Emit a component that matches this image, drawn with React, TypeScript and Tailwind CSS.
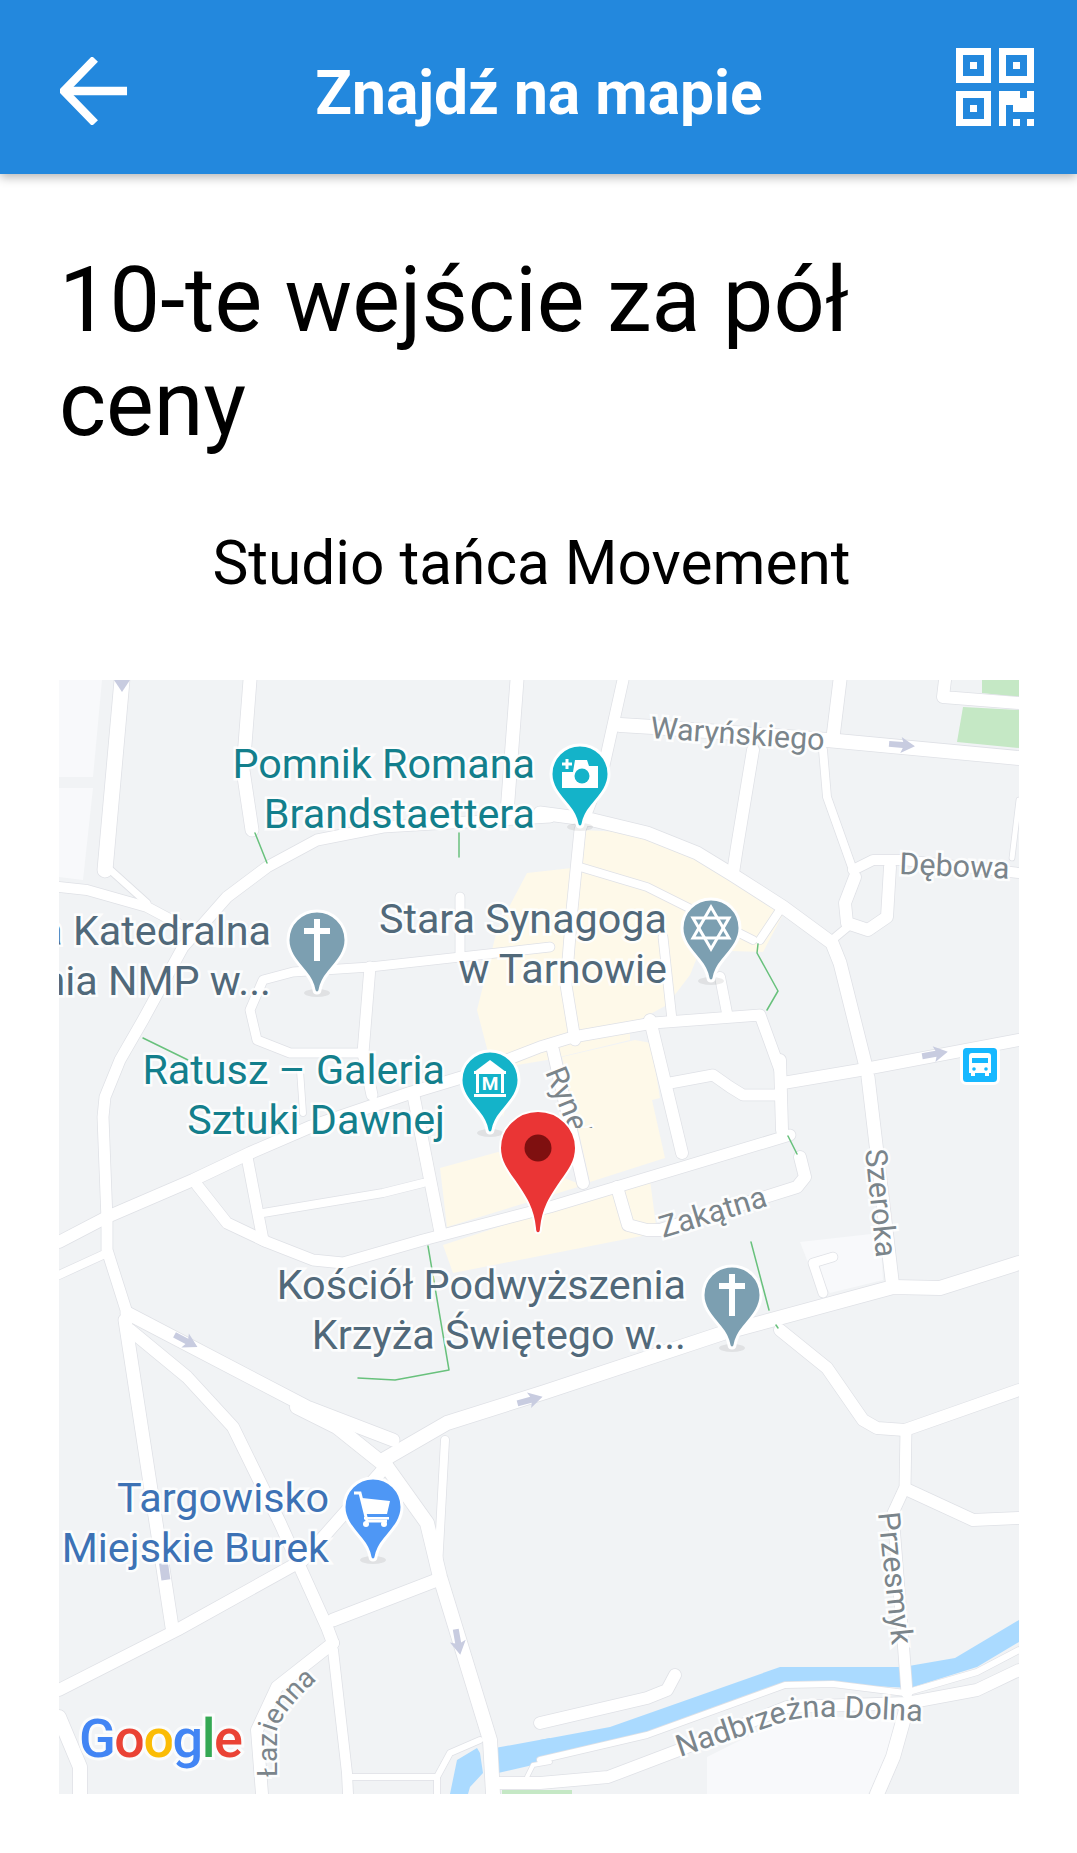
const roads: [string, number][] = [
  ["122,680 105,870", 15],
  ["59,887 87,890 147,907 177,923", 10],
  ["107,867 147,903", 7],
  ["250,680 243,770 252,830", 13],
  ["550,817 383,827 317,840 267,867 227,897 183,947 143,1020 120,1060 105,1097 103,1117 107,1220 107,1250 127,1313", 11],
  ["517,680 507,813", 13],
  ["460,897 460,953", 9],
  ["550,947 370,967 293,972 263,980 250,1010 257,1040 290,1053 360,1053", 9],
  ["370,967 363,1053 372,1095", 11],
  ["623,680 603,770 580,830 572,910 566,985 575,1040", 11],
  ["620,725 653,727 827,740 1019,758", 14],
  ["840,680 833,737", 13],
  ["753,750 737,847 733,873", 12],
  ["823,750 827,797 853,870", 8],
  ["945,680 943,697 1019,703", 12],
  ["540,813 593,820 647,833 697,853 733,875 783,907 832,943 840,963 865,1063", 13],
  ["832,940 850,925", 8],
  ["853,870 873,860 903,860 1019,873", 10],
  ["890,867 887,917 868,930 847,923 845,903 855,877", 12],
  ["1019,800 1012,858", 5],
  ["580,867 647,887 753,940", 8],
  ["780,910 760,940", 8],
  ["663,937 672,1020", 9],
  ["720,977 727,1013", 10],
  ["463,1077 540,1047 573,1037 653,1023 760,1015 780,1070", 11],
  ["783,1083 860,1070 1019,1040", 12],
  ["650,1020 682,1153", 12],
  ["553,1050 583,1183", 12],
  ["670,1083 713,1075 730,1087 743,1095 780,1095", 11],
  ["780,1060 782,1130", 12],
  ["790,1135 550,1207 423,1240 343,1263 313,1260 267,1242 227,1223 197,1185", 11],
  ["868,1077 877,1153 892,1280", 13],
  ["617,1187 628,1225 647,1230 660,1230 797,1187 805,1177 800,1157", 12],
  ["383,1460 447,1423 545,1392 723,1333 893,1287 940,1288 1019,1263", 14],
  ["823,1293 813,1263 833,1257", 9],
  ["780,1330 827,1368 863,1420 877,1428 905,1430 1019,1390", 12],
  ["906,1430 905,1487 893,1513 903,1640 907,1693", 11],
  ["908,1490 973,1520 1019,1518", 12],
  ["540,1723 647,1698 667,1690 675,1675", 12],
  ["59,1242 107,1217 193,1180 250,1153 310,1127 410,1093 463,1077", 12],
  ["59,1275 107,1253", 8],
  ["247,1157 263,1240", 11],
  ["263,1213 383,1193 423,1183", 8],
  ["413,1093 440,1230", 12],
  ["300,1070 303,1113", 6],
  ["127,1313 307,1407 393,1440", 13],
  ["125,1320 172,1627", 13],
  ["130,1330 187,1377 233,1427 280,1523 327,1627 333,1643", 12],
  ["333,1643 277,1687 257,1730 262,1794", 12],
  ["333,1650 347,1773 348,1794", 10],
  ["59,1690 177,1630 303,1560 387,1465", 12],
  ["333,1620 437,1580", 13],
  ["297,1407 337,1427 387,1467 427,1523 440,1577 490,1740 493,1794", 14],
  ["438,1567 445,1440", 8],
  ["352,1777 437,1777 450,1753 480,1740", 6],
  ["437,1777 437,1794", 6],
  ["498,1783 540,1783 608,1777 687,1747 787,1707 907,1703 977,1690 1019,1670", 12],
  ["540,1760 647,1735 785,1685 833,1684 905,1693 977,1672 1019,1650", 6],
  ["907,1707 893,1757 877,1794", 14],
  ["59,1717 80,1767 80,1794", 14],
  ["527,1777 533,1765 550,1762", 4],
];

const beige = [
  "527,873 572,868 580,830 647,833 717,860 788,905 763,952 700,950 690,975 667,1005 630,1025 630,1040 547,1060 517,1065 503,1117 490,1060 477,1010 497,930",
  "562,1057 635,1040 651,1043 660,1098 652,1100 665,1158 590,1182",
  "440,1168 498,1152 577,1183 578,1187 447,1227",
  "443,1245 612,1190 650,1180 657,1233 453,1273",
];

const greens = [
  "255,833 267,863",
  "459,833 459,857",
  "143,1038 188,1060",
  "758,944 757,953 778,991 767,1010",
  "788,1136 797,1154",
  "751,1242 769,1310",
  "776,1325 778,1328",
  "428,1246 449,1370 395,1380 358,1378",
];

const pinPath =
  "M0 -29C16 -29 29 -16 29 0C29 13 20 22 12 32C7 38 4 44 3 50C2.5 54 -2.5 54 -3 50C-4 44 -7 38 -12 32C-20 22 -29 13 -29 0C-29 -16 -16 -29 0 -29Z";

function Pin({ x, y, color, children }: { x: number; y: number; color: string; children?: React.ReactNode }) {
  return (
    <g transform={`translate(${x} ${y})`}>
      <ellipse cx="0" cy="53" rx="13" ry="4" fill="#000" opacity="0.07" />
      <path d={pinPath} fill={color} stroke="#fff" strokeWidth="3" />
      {children}
    </g>
  );
}

function Cross() {
  return (
    <g fill="#fff">
      <rect x="-3" y="-21" width="6" height="42" />
      <rect x="-13" y="-12" width="26" height="6" />
    </g>
  );
}

function Arrow({ x, y, angle }: { x: number; y: number; angle: number }) {
  return (
    <polygon
      transform={`translate(${x} ${y}) rotate(${angle})`}
      points="-13,-3 1,-3 -1,-8 13,0 -1,8 1,3 -13,3"
      fill="#c8cce0"
    />
  );
}

function Label({ x, y, lines, color }: { x: number; y: number; lines: string[]; color: string }) {
  return (
    <g fontSize="41.3" textAnchor="end" fill={color} stroke="#fff" strokeWidth="5" strokeOpacity="0.85" paintOrder="stroke">
      {lines.map((line, i) => (
        <text key={i} x={x} y={y + i * 50}>
          {line}
        </text>
      ))}
    </g>
  );
}

function Street({ x, y, angle, children }: { x: number; y: number; angle: number; children: string }) {
  return (
    <text
      transform={`translate(${x} ${y}) rotate(${angle})`}
      fontSize="30.5"
      fill="#7b858b"
      stroke="#fff"
      strokeWidth="5"
      strokeOpacity="0.85"
      paintOrder="stroke"
    >
      {children}
    </text>
  );
}

function MapView() {
  return (
    <svg viewBox="59 680 960 1114" className="block w-[960px] h-[1114px] font-['Roboto',sans-serif]">
      <defs>
        <clipPath id="rynek-clip">
          <rect x="530" y="1050" width="80" height="78" />
        </clipPath>
      </defs>
      <rect x="59" y="680" width="960" height="1114" fill="#f1f3f5" />

      <polygon points="59,680 102,680 93,777 59,777" fill="#f8f9fb" />
      <polygon points="59,788 93,788 83,880 59,877" fill="#f8f9fb" />
      <polygon points="800,1242 880,1233 883,1280 830,1293 807,1260" fill="#f8f9fb" />
      <polygon points="707,1757 787,1717 898,1717 890,1757 868,1794 707,1794" fill="#f8f9fb" />

      {beige.map((p) => (
        <polygon key={p} points={p} fill="#fef9e9" />
      ))}

      <polygon points="982,680 1019,680 1019,697 982,693" fill="#c5e8c5" />
      <polygon points="963,707 1019,710 1019,748 957,742" fill="#c5e8c5" />
      <polygon points="502,1790 572,1790 572,1794 502,1794" fill="#c5e8c5" />

      <polygon
        points="540,1740 610,1727 780,1667 903,1667 955,1658 1019,1620 1019,1642 977,1667 910,1688 833,1684 785,1685 647,1733 540,1760"
        fill="#aadaff"
      />
      <polygon points="550,1738 495,1748 498,1773 550,1761" fill="#aadaff" />
      <polygon points="480,1753 483,1773 470,1787 468,1794 450,1794 457,1760 477,1748" fill="#aadaff" />

      <g fill="none" strokeLinejoin="round" strokeLinecap="round">
        {roads.map(([p, w]) => (
          <polyline key={"edge" + p} points={p} stroke="#dfe1e6" strokeWidth={w + 1.5} />
        ))}
        {roads.map(([p, w]) => (
          <polyline key={p} points={p} stroke="#fff" strokeWidth={w} />
        ))}
        {greens.map((p) => (
          <polyline key={p} points={p} stroke="#68c17c" strokeWidth="1.5" />
        ))}
      </g>

      <Arrow x={902} y={745} angle={5} />
      <Arrow x={935} y={1054} angle={-10} />
      <Arrow x={186} y={1341} angle={28} />
      <Arrow x={530} y={1400} angle={-15} />
      <Arrow x={458} y={1642} angle={80} />
      <polygon points="114,680 130,680 122,692" fill="#c8cce0" />
      <rect x="160" y="1563" width="9" height="17" transform="rotate(-8 165 1570)" fill="#c8cce0" />

      <Street x={650} y={738} angle={4}>Waryńskiego</Street>
      <Street x={899} y={874} angle={2.5}>Dębowa</Street>
      <g clipPath="url(#rynek-clip)">
        <Street x={545} y={1072} angle={68}>Rynek</Street>
      </g>
      <Street x={865} y={1150} angle={84}>Szeroka</Street>
      <Street x={663} y={1238} angle={-17}>Zakątna</Street>
      <Street x={878} y={1513} angle={84}>Przesmyk</Street>

      <path id="nadbrzezna" d="M680 1757L790 1720Q810 1716 833 1717L935 1722" fill="none" />
      <path id="lazienna" d="M277 1777L277 1730Q285 1705 340 1660" fill="none" />
      <g fill="#7b858b" stroke="#fff" strokeWidth="5" strokeOpacity="0.85" paintOrder="stroke">
        <text fontSize="30.5">
          <textPath href="#nadbrzezna">Nadbrzeżna Dolna</textPath>
        </text>
        <text fontSize="28">
          <textPath href="#lazienna">Łazienna</textPath>
        </text>
      </g>

      <Label x={535} y={778} lines={["Pomnik Romana", "Brandstaettera"]} color="#137f8c" />
      <Label x={271} y={945} lines={["Bazylika Katedralna", "Narodzenia NMP w..."]} color="#51697a" />
      <Label x={667} y={933} lines={["Stara Synagoga", "w Tarnowie"]} color="#51697a" />
      <Label x={445} y={1084} lines={["Ratusz – Galeria", "Sztuki Dawnej"]} color="#137f8c" />
      <Label x={686} y={1299} lines={["Kościół Podwyższenia", "Krzyża Świętego w..."]} color="#51697a" />
      <Label x={329} y={1512} lines={["Targowisko", "Miejskie Burek"]} color="#3d72b5" />

      <Pin x={580} y={774} color="#14b3c9">
        <path d="M-18 -2H-7L-5 -14H7L9 -8H18V14H-18Z" fill="#fff" />
        <circle cx="2" cy="2" r="7.5" fill="#14b3c9" />
        <rect x="-18" y="-11.5" width="10" height="3" fill="#fff" />
        <rect x="-14.5" y="-15" width="3" height="10" fill="#fff" />
      </Pin>
      <Pin x={711} y={928} color="#7c9fb1">
        <g fill="none" stroke="#fff" strokeWidth="3">
          <polygon points="0,-21 18,10 -18,10" />
          <polygon points="0,21 18,-10 -18,-10" />
        </g>
      </Pin>
      <Pin x={317} y={940} color="#7c9fb1">
        <Cross />
      </Pin>
      <Pin x={490} y={1080} color="#14b3c9">
        <polygon points="0,-20 16,-8 -16,-8" fill="#fff" />
        <rect x="-16" y="-9" width="32" height="3" fill="#fff" />
        <rect x="-14" y="-7" width="3" height="20" fill="#fff" />
        <rect x="11" y="-7" width="3" height="20" fill="#fff" />
        <rect x="-16" y="14" width="32" height="3" fill="#fff" />
        <text x="0" y="10" textAnchor="middle" fontSize="19" fontWeight="700" fill="#fff">M</text>
      </Pin>
      <Pin x={732} y={1295} color="#7c9fb1">
        <Cross />
      </Pin>
      <Pin x={373} y={1507} color="#4e97f5">
        <g fill="none" stroke="#fff" strokeWidth="3">
          <path d="M-19 -14H-13L-6 14H14" />
        </g>
        <polygon points="-11,-9 17,-6 14,7 -8,7" fill="#fff" />
        <rect x="-9" y="10" width="25" height="2.5" fill="#fff" />
        <circle cx="-7" cy="17" r="3" fill="#fff" />
        <circle cx="11" cy="17" r="3" fill="#fff" />
      </Pin>

      <g>
        <rect x="961.5" y="1046.5" width="37" height="37" rx="5" fill="#17b8ff" stroke="#fff" strokeWidth="3" />
        <path d="M972 1053H988Q991 1053 991 1056V1073H989V1076H985V1073H975V1076H971V1073H969V1056Q969 1053 972 1053Z" fill="#fff" />
        <rect x="972" y="1058" width="16" height="5" fill="#17b8ff" />
        <circle cx="974" cy="1069" r="1.8" fill="#17b8ff" />
        <circle cx="986" cy="1069" r="1.8" fill="#17b8ff" />
      </g>

      <g transform="translate(538 1148)">
        <path
          d="M0 -37C21 -37 38 -20 38 0C38 14 30 24 22 35C14 47 5 59 3 80C3 87 -3 87 -3 80C-5 59 -14 47 -22 35C-30 24 -38 14 -38 0C-38 -20 -21 -37 0 -37Z"
          fill="#ea3535"
          stroke="#fff"
          strokeWidth="2"
        />
        <circle cx="0" cy="0" r="13.5" fill="#7f1010" />
      </g>

      <text
        x="79"
        y="1757"
        fontSize="54"
        fontWeight="500"
        stroke="#fff"
        strokeWidth="6"
        strokeOpacity="0.7"
        paintOrder="stroke"
        letterSpacing="-1.5"
      >
        <tspan fill="#4285f4">G</tspan>
        <tspan fill="#ea4335">o</tspan>
        <tspan fill="#fbbc05">o</tspan>
        <tspan fill="#4285f4">g</tspan>
        <tspan fill="#34a853">l</tspan>
        <tspan fill="#ea4335">e</tspan>
      </text>
    </svg>
  );
}

function QrIcon() {
  return (
    <svg viewBox="0 0 11 11" className="w-[78px] h-[78px]" fill="#fff" fillRule="evenodd" shapeRendering="crispEdges">
      <path d="M0 0H5V5H0ZM1 1V4H4V1ZM2 2H3V3H2Z" />
      <path d="M6 0H11V5H6ZM7 1V4H10V1ZM8 2H9V3H8Z" />
      <path d="M0 6H5V11H0ZM1 7V10H4V7ZM2 8H3V9H2Z" />
      <rect x="6" y="6" width="1" height="5" />
      <rect x="6" y="6" width="3" height="1" />
      <rect x="10" y="6" width="1" height="1" />
      <rect x="6" y="7" width="5" height="1" />
      <rect x="8" y="8" width="3" height="1" />
      <rect x="8" y="10" width="1" height="1" />
      <rect x="10" y="10" width="1" height="1" />
    </svg>
  );
}

export default function App() {
  return (
    <div className="w-[1077px] h-[1853px] bg-white font-['Roboto',sans-serif] overflow-hidden">
      <header className="h-[174px] bg-[#2388dd] flex items-center justify-between pl-[60px] pr-[43px] shadow-[0_3px_10px_rgba(0,0,0,0.3)] relative">
        <svg viewBox="0 0 70 70" className="w-[68px] h-[68px] mt-2" fill="none" stroke="#fff" strokeWidth="8.5">
          <path d="M69 35H6" />
          <path d="M36 2L4 35L36 68" />
        </svg>
        <h1 className="text-[60.5px] leading-none font-bold text-white mt-[14px] mr-[6px]">Znajdź na mapie</h1>
        <QrIcon />
      </header>

      <main className="px-[59px]">
        <h2 className="mt-[75px] text-[90px] leading-[104px] text-black">10-te wejście za pół ceny</h2>
        <p className="mt-[73px] text-[60.4px] leading-[68px] text-center pr-[14px] text-black">Studio tańca Movement</p>
        <div className="mt-[82px]">
          <MapView />
        </div>
      </main>
    </div>
  );
}
